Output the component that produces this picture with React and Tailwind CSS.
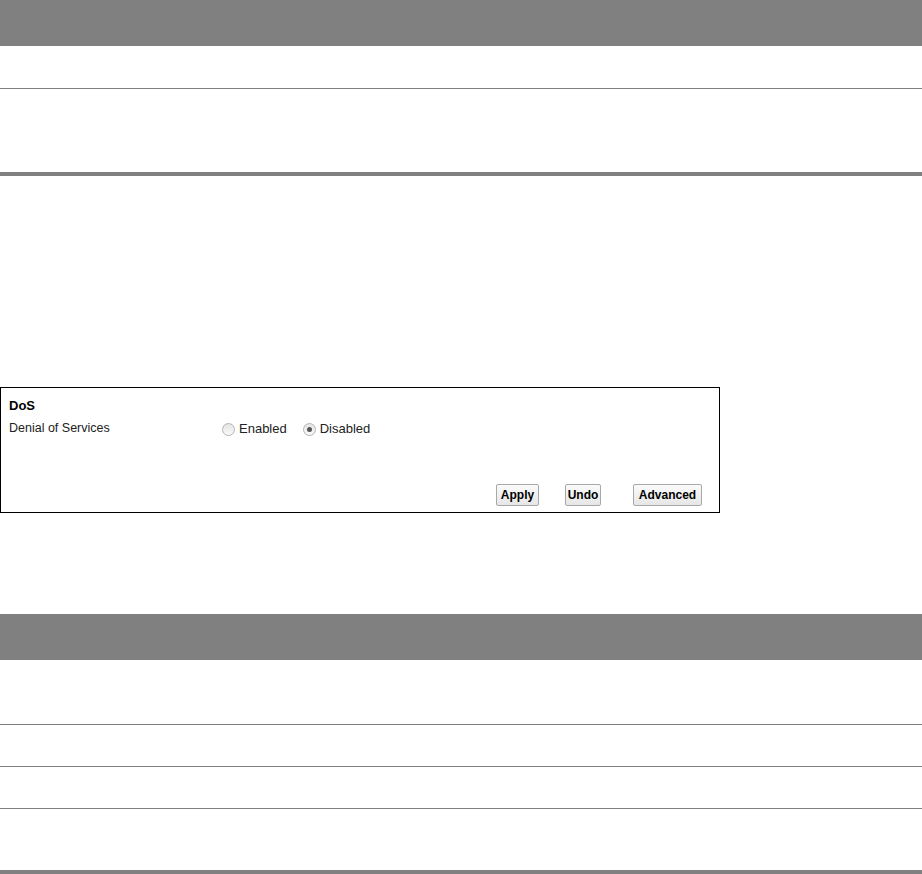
import React from "react";

// Bande grise de titre
function Band() {
    return <div className="h-[46px] bg-[#808080]" />;
}

function Radio({ checked, label }) {
    return (
        <label className="flex items-center">
            <span className="relative inline-flex w-[13px] h-[13px] rounded-full border border-[#b4b4b4] bg-gradient-to-b from-[#e4e4e4] to-[#fafafa] items-center justify-center">
                {checked && <span className="w-[5px] h-[5px] rounded-full bg-[#555]" />}
            </span>
            <span className="ml-[4px] text-[13px]">{label}</span>
        </label>
    );
}

function Btn({ children, w }) {
    return (
        <button className={"h-[22px] border border-[#a8a8a8] rounded-[2px] bg-gradient-to-b from-[#fbfbfb] to-[#e6e6e6] text-[12px] font-bold text-black leading-none " + w}>
            {children}
        </button>
    );
}

export default function App() {
    return (
        <div className="w-[922px] h-[874px] bg-white text-black" style={{ fontFamily: '"Liberation Sans", Arial, sans-serif' }}>
            <Band />
            <div className="h-[43px] border-b border-[#808080]" />
            <div className="h-[87px] border-b-4 border-[#808080]" />
            <div className="h-[211px]" />
            <div className="w-[720px] h-[126px] border border-black flex flex-col">
                <div className="pl-[8px] pt-[10px] text-[13px] font-bold leading-[16px]">DoS</div>
                <div className="flex items-center pl-[8px] pt-[4px] text-[12.5px] leading-[18px] text-[#222]">
                    <div className="w-[213px]">Denial of Services</div>
                    <div className="flex items-center gap-[16px] pt-[2px]">
                        <Radio label="Enabled" />
                        <Radio checked label="Disabled" />
                    </div>
                </div>
                <div className="flex-1" />
                <div className="flex justify-end pr-[17px] pb-[6px]">
                    <Btn w="w-[43px]">Apply</Btn>
                    <div className="w-[26px]" />
                    <Btn w="w-[36px]">Undo</Btn>
                    <div className="w-[32px]" />
                    <Btn w="w-[69px]">Advanced</Btn>
                </div>
            </div>
            <div className="h-[101px]" />
            <Band />
            <div className="h-[65px] border-b border-[#808080]" />
            <div className="h-[42px] border-b border-[#808080]" />
            <div className="h-[42px] border-b border-[#808080]" />
            <div className="h-[65px] border-b-4 border-[#808080]" />
        </div>
    );
}
